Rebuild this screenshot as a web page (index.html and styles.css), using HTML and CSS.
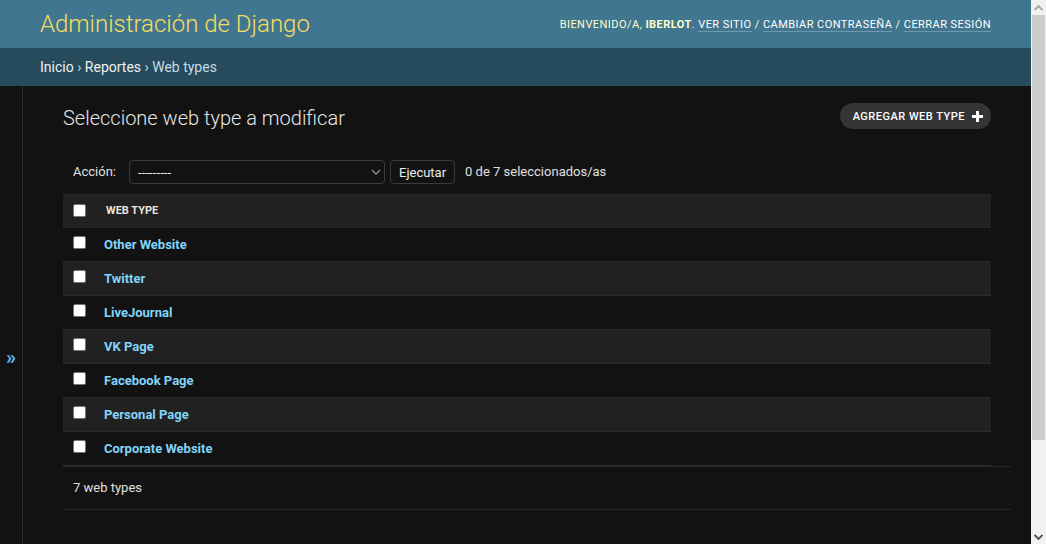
FILE: index.html
```html
<!DOCTYPE html>
<html lang="es">
<head>
<meta charset="utf-8">
<title>Seleccione web type a modificar | Administración de Django</title>
<link rel="stylesheet" href="styles.css">
</head>
<body>
<header class="header">
  <div class="branding">Administración de Django</div>
  <div class="user-tools">Bienvenido/a, <strong>iberlot</strong>. <a href="#">Ver sitio</a> / <a href="#">Cambiar contraseña</a> / <a href="#">Cerrar sesión</a></div>
</header>
<nav class="breadcrumbs"><a href="#">Inicio</a> › <a href="#">Reportes</a> › Web types</nav>
<div class="main">
  <button class="nav-toggle" type="button">»</button>
  <div class="content">
    <div class="content-head">
      <h1>Seleccione web type a modificar</h1>
      <a class="addlink" href="#">Agregar web type
        <svg width="11" height="11" viewBox="0 0 11 11" aria-hidden="true"><path d="M4 0h3v4h4v3H7v4H4V7H0V4h4z" fill="#fff"/></svg>
      </a>
    </div>
    <div class="actions">
      <span class="action-label">Acción:</span>
      <span class="select-wrap">
        <select class="action-select"><option>---------</option><option>Eliminar web types seleccionado/s</option></select>
        <svg class="select-arrow" width="10" height="6" viewBox="0 0 10 6" aria-hidden="true"><path d="M1 1l4 4 4-4" fill="none" stroke="#8a8a8a" stroke-width="1.4"/></svg>
      </span>
      <button class="run-button" type="button">Ejecutar</button>
      <span class="counter">0 de 7 seleccionados/as</span>
    </div>
    <table class="results">
      <thead>
        <tr>
          <th class="cb-col"><input type="checkbox" class="cb"></th>
          <th><span class="th-text">Web type</span></th>
        </tr>
      </thead>
      <tbody>
        <tr><td class="cb-col"><input type="checkbox" class="cb"></td><td><a href="#">Other Website</a></td></tr>
        <tr><td class="cb-col"><input type="checkbox" class="cb"></td><td><a href="#">Twitter</a></td></tr>
        <tr><td class="cb-col"><input type="checkbox" class="cb"></td><td><a href="#">LiveJournal</a></td></tr>
        <tr><td class="cb-col"><input type="checkbox" class="cb"></td><td><a href="#">VK Page</a></td></tr>
        <tr><td class="cb-col"><input type="checkbox" class="cb"></td><td><a href="#">Facebook Page</a></td></tr>
        <tr><td class="cb-col"><input type="checkbox" class="cb"></td><td><a href="#">Personal Page</a></td></tr>
        <tr><td class="cb-col"><input type="checkbox" class="cb"></td><td><a href="#">Corporate Website</a></td></tr>
      </tbody>
    </table>
    <p class="paginator">7 web types</p>
  </div>
</div>
<div class="scrollbar" aria-hidden="true">
  <div class="sb-arrow">
    <svg width="9" height="6" viewBox="0 0 9 6"><path d="M0.5 5L4.5 1L8.5 5" fill="none" stroke="#a3a3a3" stroke-width="1.8"/></svg>
  </div>
  <div class="sb-thumb"></div>
  <div class="sb-track"></div>
  <div class="sb-arrow">
    <svg width="9" height="6" viewBox="0 0 9 6"><path d="M0.5 1L4.5 5L8.5 1" fill="none" stroke="#505050" stroke-width="1.8"/></svg>
  </div>
</div>
</body>
</html>
```
FILE: styles.css
```css
* { box-sizing: border-box; }

html, body {
  margin: 0;
  padding: 0;
  background: #121212;
}

body {
  padding-right: 15px;
  font-family: Roboto, "Liberation Sans", sans-serif;
  font-size: 14px;
  color: #eeeeee;
}

a { text-decoration: none; }

.header {
  display: flex;
  justify-content: space-between;
  align-items: center;
  padding: 10px 40px;
  background: #417690;
}

.branding {
  font-size: 24px;
  font-weight: 300;
  line-height: 28px;
  color: #f5dd5d;
}

.user-tools {
  margin-top: 2px;
  font-size: 11px;
  font-weight: 400;
  letter-spacing: 0.45px;
  text-transform: uppercase;
  color: #ffffcc;
  line-height: 14px;
}

.user-tools strong { font-weight: 700; }

.user-tools a {
  color: #ffffff;
  border-bottom: 1px solid rgba(255, 255, 255, 0.25);
}

.breadcrumbs {
  padding: 10px 40px;
  background: #264b5d;
  color: #c4dce8;
  font-size: 14px;
  line-height: 18px;
}

.breadcrumbs a { color: #f0f0f0; }

.main {
  display: flex;
  min-height: calc(100vh + 28px);
}

.nav-toggle {
  flex: 0 0 23px;
  width: 23px;
  height: 100vh;
  display: flex;
  align-items: center;
  justify-content: center;
  padding: 0 0 2px;
  border: 0;
  border-right: 1px solid #2a2a2a;
  background: #121212;
  color: #5fb4ea;
  font-family: Roboto, "Liberation Sans", sans-serif;
  font-size: 20px;
  font-weight: 700;
}

.content {
  flex: 1;
  min-width: 0;
  padding: 20px 40px;
}

.content-head {
  display: flex;
  justify-content: space-between;
  align-items: flex-start;
}

h1 {
  margin: 0 0 20px;
  font-size: 20px;
  font-weight: 300;
  line-height: 24px;
  color: #e6e6e6;
}

.addlink {
  display: flex;
  align-items: center;
  gap: 7px;
  height: 26px;
  margin-top: -3px;
  padding: 0 8px 0 13px;
  border-radius: 15px;
  background: #353535;
  color: #ffffff;
  font-size: 11px;
  font-weight: 500;
  letter-spacing: 0.5px;
  text-transform: uppercase;
}

.actions {
  display: flex;
  align-items: center;
  padding: 10px;
  line-height: 24px;
  font-size: 13px;
  color: #e0e0e0;
}

.action-label { margin-right: 13px; }

.select-wrap {
  position: relative;
  display: block;
  width: 256px;
  height: 24px;
}

.action-select {
  appearance: none;
  -webkit-appearance: none;
  width: 100%;
  height: 24px;
  margin: 0;
  padding: 0 0 0 8px;
  border: 1px solid #3a3a3a;
  border-radius: 4px;
  background: #121212;
  color: #eeeeee;
  font-family: Roboto, "Liberation Sans", sans-serif;
  font-size: 13px;
  letter-spacing: 0.1px;
}

.select-arrow {
  position: absolute;
  right: 4px;
  top: 9px;
  pointer-events: none;
}

.run-button {
  height: 24px;
  margin: 0 0 0 5px;
  padding: 0 8px;
  border: 1px solid #3a3a3a;
  border-radius: 4px;
  background: #121212;
  color: #eeeeee;
  font-family: Roboto, "Liberation Sans", sans-serif;
  font-size: 13px;
  line-height: 1;
}

.counter { margin-left: 10px; }

.results {
  width: 100%;
  border-collapse: collapse;
  font-size: 13px;
}

.results thead th {
  padding: 0;
  text-align: left;
  background: #212121;
  border-top: 1px solid #272727;
  border-bottom: 1px solid #272727;
  vertical-align: middle;
}

.th-text {
  display: block;
  padding: 8px 12px;
  line-height: 16px;
  font-size: 11px;
  font-weight: 700;
  text-transform: uppercase;
  color: #e8e4dc;
}

.results th.cb-col {
  width: 31px;
  padding: 0 8px 1px 10px;
  vertical-align: middle;
}

.results tbody td {
  padding: 8px 10px;
  line-height: 17px;
  border-bottom: 1px solid #2a2a2a;
  vertical-align: top;
}

.results tbody td.cb-col {
  width: 31px;
  padding: 8px 8px 8px 10px;
}

.results tbody tr:nth-child(even) td { background: #212121; }

.results tbody tr:last-child td { border-bottom-color: #333333; }

.results td a {
  display: inline-block;
  margin-top: -1px;
  color: #81d4fa;
  font-weight: 700;
}

.cb {
  appearance: none;
  -webkit-appearance: none;
  display: block;
  width: 13px;
  height: 13px;
  margin: 0;
  border: 1px solid #767676;
  border-radius: 2px;
  background: #ffffff;
}

.paginator {
  width: 100%;
  box-sizing: content-box;
  margin: 0;
  padding: 10px;
  font-size: 13px;
  line-height: 22px;
  color: #e0e0e0;
  border-top: 1px solid #272727;
  border-bottom: 1px solid #272727;
}

.scrollbar {
  position: fixed;
  top: 0;
  right: 0;
  width: 15px;
  height: 100vh;
  display: flex;
  flex-direction: column;
  background: #f1f1f1;
}

.sb-arrow {
  flex: 0 0 15px;
  display: flex;
  align-items: center;
  justify-content: center;
}

.sb-thumb {
  flex: 0 0 425px;
  margin: 0 1px;
  background: #cdcdcd;
}

.sb-track { flex: 1; }
```
